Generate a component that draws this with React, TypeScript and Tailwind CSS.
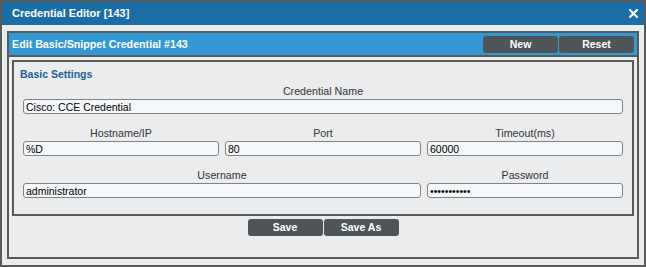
import { useState } from 'react';

const font = { fontFamily: '"Liberation Sans", Arial, sans-serif' };

function Field({ label, value, type = 'text', className = '' }: { label: string; value: string; type?: string; className?: string }) {
    const [v, setV] = useState(value);
    return (
        <div className={`flex flex-col ${className}`}>
            <label className="h-[12px] leading-[12px] text-center text-[10.7px] text-[#333]">{label}</label>
            <input
                className="mt-[2px] h-[15px] w-full rounded-[3px] border border-[#828282] bg-[#f5f8fa] px-[2px] text-[10.5px] leading-[13px] text-black outline-none"
                onChange={(e) => setV(e.target.value)}
                type={type}
                value={v}
            />
        </div>
    );
}

function Btn({ children }: { children: string }) {
    return (
        <button className="h-[17px] w-[75px] rounded-[3px] bg-[#4e5558] text-[10.5px] font-bold leading-[17px] text-white">
            {children}
        </button>
    );
}

export default function App() {
    return (
        <div className="flex h-[267px] w-[646px] flex-col border-2 border-[#595959] bg-[#ebecee]" style={font}>
            <div className="flex h-[23px] shrink-0 items-center justify-between bg-[#1b6ea5] pl-[10px] pr-[6px] text-[11px] font-bold text-white">
                <span>Credential Editor [143]</span>
                <svg className="h-[9px] w-[9px]" viewBox="0 0 9 9">
                    <path d="M1 1 L8 8 M8 1 L1 8" stroke="white" strokeLinecap="square" strokeWidth="2.2" />
                </svg>
            </div>

            <div className="mx-[5px] mt-[6px] flex h-[228px] flex-col border-2 border-[#595959]">
                <div className="flex h-[24px] shrink-0 items-center justify-between border-b-2 border-[#595959] bg-[#3399d5] pl-[3px] pr-[3px]">
                    <span className="text-[10.7px] font-bold text-white">Edit Basic/Snippet Credential #143</span>
                    <div className="flex gap-[1px]">
                        <Btn>New</Btn>
                        <Btn>Reset</Btn>
                    </div>
                </div>

                <div className="px-[3px] pt-[3px]">
                    <div className="h-[156px] border-2 border-[#595959] px-[9px] pt-[6px]">
                        <div className="-ml-[3px] h-[12px] text-[10.5px] font-bold leading-[12px] text-[#1f5f99]">
                            Basic Settings
                        </div>
                        <Field className="mt-[5px]" label="Credential Name" value="Cisco: CCE Credential" />
                        <div className="mt-[13px] grid grid-cols-3 gap-x-[6px]">
                            <Field label="Hostname/IP" value="%D" />
                            <Field label="Port" value="80" />
                            <Field label="Timeout(ms)" value="60000" />
                        </div>
                        <div className="mt-[13px] grid grid-cols-3 gap-x-[6px]">
                            <Field className="col-span-2" label="Username" value="administrator" />
                            <Field label="Password" type="password" value="xxxxxxxxxxx" />
                        </div>
                    </div>
                </div>

                <div className="mt-[3px] flex justify-center gap-[1px]">
                    <Btn>Save</Btn>
                    <Btn>Save As</Btn>
                </div>
            </div>
        </div>
    );
}
